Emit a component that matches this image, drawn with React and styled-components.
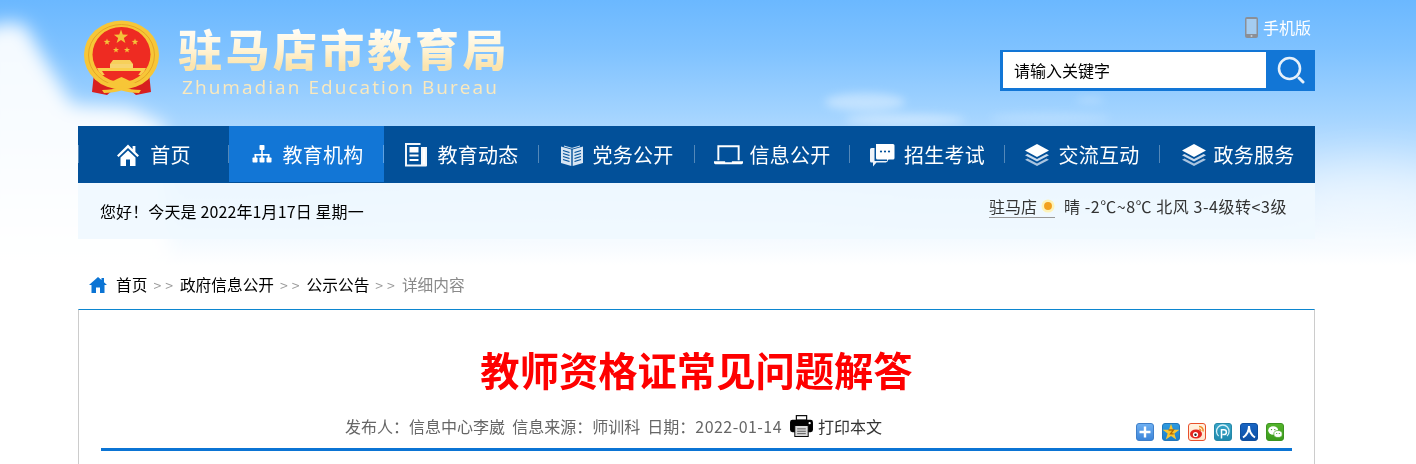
import React from "react";
import styled, { createGlobalStyle } from "styled-components";

const Global = createGlobalStyle`
  html, body { margin: 0; padding: 0; background: #fff; }
  body { font-family: "Noto Sans CJK SC", "Liberation Sans", sans-serif; }
  * { box-sizing: border-box; }
`;

const Page = styled.div`
  position: relative;
  width: 1416px;
  height: 464px;
  overflow: hidden;
  background: linear-gradient(180deg, #6bb8ff 0, #7fc2ff 50px, #a6d5ff 120px, #d3eaff 190px, #f4faff 240px, #fff 265px);
`;

const Sky = styled.svg`
  position: absolute;
  left: 0;
  top: 0;
  z-index: 0;
`;

const Wrap = styled.div`
  position: relative;
  z-index: 1;
  width: 1237px;
  margin-left: 78px;
`;

const Header = styled.header`
  height: 126px;
  display: flex;
  justify-content: space-between;
`;

const Brand = styled.div`
  display: flex;
  align-items: flex-start;
  padding: 20px 0 0 5px;
`;

const Names = styled.div`
  margin-left: 17px;
  padding-top: 5px;
`;

const CnName = styled.div`
  font-size: 44px;
  line-height: 46px;
  font-weight: 900;
  letter-spacing: 3.4px;
  white-space: nowrap;
  background: linear-gradient(180deg, #fffdf6 10%, #fff3d4 55%, #fbe4ad 90%);
  -webkit-background-clip: text;
  background-clip: text;
  color: transparent;
`;

const EnName = styled.div`
  font-family: "Open Sans", "Liberation Sans", sans-serif;
  font-size: 19px;
  line-height: 22px;
  letter-spacing: 2.05px;
  color: #fbe9bd;
  margin: 5px 0 0 4px;
  white-space: nowrap;
`;

const Tools = styled.div`
  width: 315px;
  padding-top: 15px;
  display: flex;
  flex-direction: column;
  align-items: flex-end;
`;

const Mobile = styled.a`
  display: flex;
  align-items: center;
  gap: 5px;
  height: 24px;
  margin-right: 4px;
  color: #fff;
  font-size: 16px;
`;

const Search = styled.div`
  margin-top: 11px;
  width: 315px;
  height: 41px;
  display: flex;
  background: #1276d6;
  padding: 2px 0 3px 3px;
`;

const SearchInput = styled.div`
  width: 263px;
  background: #fff;
  padding-left: 11px;
  font-size: 16px;
  line-height: 36px;
  color: #000;
`;

const SearchBtn = styled.div`
  flex: 1;
  display: flex;
  align-items: center;
  justify-content: center;
`;

const Nav = styled.nav`
  height: 57px;
  background: #025099;
  display: flex;
`;

const NavItem = styled.a`
  position: relative;
  width: ${(p) => p.$w}px;
  height: ${(p) => (p.$active ? 56 : 57)}px;
  flex: none;
  display: flex;
  align-items: center;
  justify-content: center;
  gap: ${(p) => p.$gap}px;
  padding-left: ${(p) => p.$shift || 0}px;
  font-size: 20px;
  letter-spacing: 0.3px;
  color: #fff;
  white-space: nowrap;
  background: ${(p) => (p.$active ? "#1276d6" : "transparent")};

  &::after {
    content: "";
    position: absolute;
    right: 0;
    top: 19px;
    width: 1px;
    height: 18px;
    background: rgba(255, 255, 255, 0.32);
    display: ${(p) => (p.$last ? "none" : "block")};
  }

  &::before {
    content: "";
    position: absolute;
    left: 0;
    top: 19px;
    width: 1px;
    height: 18px;
    background: rgba(255, 255, 255, 0.32);
    display: ${(p) => (p.$first ? "block" : "none")};
  }
`;

const Info = styled.div`
  height: 56px;
  background: rgba(240, 248, 255, 0.9);
  padding: 0 28px 0 22px;
  display: flex;
  justify-content: space-between;
  align-items: center;
  font-size: 16px;
  color: #222;
`;

const Greeting = styled.div`
  color: #000;
  white-space: pre;
  letter-spacing: 0.12px;
  margin-top: -1px;
`;

const Weather = styled.div`
  display: flex;
  align-items: center;
  margin-top: -10px;
  white-space: nowrap;
  color: #333;
  letter-spacing: 0.55px;
`;

const City = styled.span`
  display: flex;
  align-items: center;
  gap: 4px;
  height: 24px;
  border-bottom: 1px solid #999;
  margin-right: 9px;
  letter-spacing: 0;
`;

const Crumbs = styled.div`
  height: 70px;
  padding: 22px 0 0 11px;
  display: flex;
  align-items: center;
  font-size: 15.7px;
  line-height: 24px;
  color: #000;
  white-space: nowrap;
`;

const CrumbSep = styled.span`
  color: #999;
  font-size: 14px;
  letter-spacing: 4px;
  margin: 0 3px 0 6px;
`;

const CrumbNow = styled.span`
  color: #8a8a8a;
`;

const Article = styled.article`
  background: #fff;
  border: 1px solid #ccc;
  border-top-color: #0c86d0;
  height: 200px;
  padding: 0 22px;
`;

const Title = styled.h1`
  margin: 0;
  padding-top: 29px;
  height: 93px;
  font-size: 39.3px;
  line-height: 60px;
  font-weight: 700;
  color: #fe0000;
  text-align: center;
`;

const Meta = styled.div`
  position: relative;
  height: 48px;
  border-bottom: 3px solid #0b74d4;
  display: flex;
  align-items: flex-start;
  padding: 11px 0 0 244px;
  font-size: 16px;
  line-height: 24px;
  color: #666;
  white-space: pre;
`;

const MetaDate = styled.span`
  letter-spacing: 0.45px;
`;

const PrintLink = styled.span`
  display: flex;
  align-items: center;
  gap: 5px;
  margin-left: 8px;
  color: #333;
`;

const Share = styled.div`
  position: absolute;
  right: 8px;
  top: 20px;
  display: flex;
  gap: 8px;
`;

const ShareIcon = styled.svg`
  display: block;
  width: 18px;
  height: 18px;
`;

const NavSvg = styled.svg`
  display: block;
  flex: none;
`;

const HomeIcon = () => (
  <NavSvg width="24" height="24" viewBox="0 0 24 24" fill="#fff">
    <path d="M12 1.500 1 12.500l1.600 1.400L12 5l9.400 8.900 1.600-1.400-3.600-3.500V3h-2.800v3.300z" />
    <path d="M4.500 14.500 12 7.500l7.500 7V23H14v-6.500h-4V23H4.500z" />
  </NavSvg>
);
const OrgIcon = () => (
  <NavSvg width="20" height="20" viewBox="0 0 20 20" fill="#fff">
    <rect x="7.500" y="1" width="5" height="5" rx=".8" />
    <rect x="9.200" y="5" width="1.600" height="6" />
    <rect x="2.600" y="10" width="14.800" height="1.600" />
    <rect x="2.600" y="10" width="1.600" height="4" />
    <rect x="15.800" y="10" width="1.600" height="4" />
    <rect x="9.200" y="10" width="1.600" height="4" />
    <rect x="0.500" y="13.500" width="5" height="5" rx=".8" />
    <rect x="7.500" y="13.500" width="5" height="5" rx=".8" />
    <rect x="14.500" y="13.500" width="5" height="5" rx=".8" />
  </NavSvg>
);
const NewsIcon = () => (
  <NavSvg width="24" height="25" viewBox="0 0 24 25">
    <path d="M1 1h15.500v2H3v19.500h14V5h6v18.500a1 1 0 0 1-1 1H1z" fill="#fff" opacity=".95" />
    <rect x="5.500" y="5" width="9" height="5.500" fill="#fff" />
    <rect x="5.500" y="12.500" width="9" height="2" fill="#fff" />
    <rect x="5.500" y="17" width="9" height="2" fill="#fff" />
    <rect x="19" y="7" width="2" height="15" fill="#fff" />
  </NavSvg>
);
const BookIcon = () => (
  <NavSvg width="24" height="24" viewBox="0 0 24 24">
    <path d="M1 3.500 11.300 6.500V23L1 20z" fill="#d7e5f3" />
    <path d="M23 3.500 12.700 6.500V23L23 20z" fill="#d7e5f3" />
    <path d="M3 7.500l6.500 2M3 10.500l6.500 2M3 13.500l6.500 2M3 16.500l6.500 2M21 7.500l-6.500 2M21 10.500l-6.500 2M21 13.500l-6.500 2M21 16.500l-6.500 2" stroke="#025099" strokeWidth="1.300" />
    <path d="M4 3 11.500 5.200 12 5.500 12.500 5.200 20 3" stroke="#d7e5f3" fill="none" strokeWidth="1" />
  </NavSvg>
);
const LaptopIcon = () => (
  <NavSvg width="29" height="20" viewBox="0 0 30 20" fill="#fff">
    <path d="M3.500 0h23v15.500h-2V2h-19v13.500h-2z" />
    <path d="M0 16.500h11.500v1h7v-1H30V18a1.500 1.500 0 0 1-1.500 1.500h-27A1.500 1.500 0 0 1 0 18z" />
  </NavSvg>
);
const ChatIcon = () => (
  <NavSvg width="25" height="24" viewBox="0 0 25 24">
    <path d="M6 1h17a1.500 1.500 0 0 1 1.500 1.500V15a1.500 1.500 0 0 1-1.500 1.500h-4.500l-1.500 2V16.500H7.500A1.500 1.500 0 0 1 6 15z" fill="#fff" />
    <path d="M4.500 5H1.500A1.500 1.500 0 0 0 0 6.500V18a1.500 1.500 0 0 0 1.500 1.500H3v4l3.500-4H16l2-1.500H5a.5.5 0 0 1-.500-.500z" fill="#eef3f9" />
    <circle cx="11" cy="8.500" r="1.100" fill="#025099" />
    <circle cx="15" cy="8.500" r="1.100" fill="#025099" />
    <circle cx="19" cy="8.500" r="1.100" fill="#025099" />
  </NavSvg>
);
const LayersIcon = () => (
  <NavSvg width="24" height="22" viewBox="0 0 24 22">
    <path d="M12 0 24 6.500 12 13 0 6.500z" fill="#fff" />
    <path d="M2.500 10 0 11.200 12 17.500 24 11.200 21.500 10 12 15z" fill="#c9daec" />
    <path d="M2.500 14.500 0 15.700 12 22 24 15.700 21.500 14.500 12 19.500z" fill="#a9c4e0" />
  </NavSvg>
);

const navItems = [
  { label: "首页", w: 151, gap: 10, icon: <HomeIcon />, first: true },
  { label: "教育机构", w: 155, gap: 10, shift: 3, icon: <OrgIcon />, active: true },
  { label: "教育动态", w: 155, gap: 9, icon: <NewsIcon /> },
  { label: "党务公开", w: 156, gap: 8, icon: <BookIcon /> },
  { label: "信息公开", w: 155, gap: 6, icon: <LaptopIcon /> },
  { label: "招生考试", w: 155, gap: 9, icon: <ChatIcon /> },
  { label: "交流互动", w: 155, gap: 9, icon: <LayersIcon /> },
  { label: "政务服务", w: 155, gap: 7, shift: 2, icon: <LayersIcon />, last: true },
];

const Star = ({ cx, cy, r, fill = "#f4c33a", rot = 0 }) => {
  const pts = [];
  for (let i = 0; i < 10; i++) {
    const rad = i % 2 ? r * 0.4 : r;
    const a = ((-90 + rot + i * 36) * Math.PI) / 180;
    pts.push(`${(cx + rad * Math.cos(a)).toFixed(2)},${(cy + rad * Math.sin(a)).toFixed(2)}`);
  }
  return <polygon points={pts.join(" ")} fill={fill} />;
};

const Emblem = () => (
  <svg width="78" height="76" viewBox="0 0 78 76" style={{ display: "block" }}>
    <path d="M11 53 L9 72 L24 75 L30 70 L47 70 L53 75 L68 72 L66 53z" fill="#d81f1f" />
    <ellipse cx="38.500" cy="35" rx="37.500" ry="34.500" fill="#f7c637" />
    <ellipse cx="38.500" cy="35" rx="33" ry="30.500" fill="none" stroke="#e5a626" strokeWidth="1" />
    <ellipse cx="38.500" cy="34.500" rx="29" ry="27.500" fill="#ee2b22" />
    <Star cx={38} cy={17} r={7.500} />
    <Star cx={24} cy={22} r={3.500} />
    <Star cx={52} cy={22} r={3.500} />
    <Star cx={33} cy={30} r={3.200} />
    <Star cx={44} cy={30} r={3.200} />
    <path d="M30 40h17l3 4H27z" fill="#f7d05a" />
    <rect x="27" y="44" width="23" height="5" fill="#f7d470" />
    <path d="M14 48h49c-1 3-3 5-5 7H19c-2-2-4-4-5-7z" fill="#f9cf4c" />
    <path d="M19 51h39c-2 3-4 6-7 8H26c-3-2-5-5-7-8z" fill="#ee2b22" />
    <path d="M24 63c5-1 9-4 14.500-6 5.500 2 9.500 5 14.500 6l-2 3H26z" fill="#f7c637" />
    <path d="M19 70c7 0 13-1 19.500-4 6.500 3 12.500 4 19.500 4l-2 3c-7 0-12-1-17.500-2.500C33 72 28 73 21 73z" fill="#f7c637" />
  </svg>
);

const PhoneIcon = () => (
  <svg width="13" height="21" viewBox="0 0 13 21">
    <rect x="0" y="0" width="13" height="21" rx="2" fill="#8b8f96" />
    <rect x="1.500" y="2" width="10" height="15" fill="#a4ccf0" />
    <circle cx="6.500" cy="19" r="1" fill="#c8ccd2" />
  </svg>
);

const SearchIcon = () => (
  <svg width="28" height="28" viewBox="0 0 28 28" fill="none">
    <circle cx="12.500" cy="12.500" r="10.500" stroke="#e6f1fb" strokeWidth="2.600" />
    <path d="M22 22l4 4" stroke="#e6f1fb" strokeWidth="3" strokeLinecap="round" />
  </svg>
);

const SunIcon = () => (
  <svg width="14" height="14" viewBox="0 0 16 16">
    <circle cx="8" cy="8" r="7.500" fill="#fdf2b8" />
    <circle cx="8" cy="8" r="4.500" fill="#f2a01e" />
  </svg>
);

const CrumbHome = () => (
  <svg width="18" height="16" viewBox="0 0 18 16" style={{ marginRight: 9 }}>
    <path d="M9 0 0 8h2.500v8h4.500v-5.500h4V16h4.500V8H18l-3-2.700V1h-2.500v2.100z" fill="#0b74d4" />
  </svg>
);

const PrinterIcon = () => (
  <svg width="23" height="22" viewBox="0 0 24 23">
    <path d="M6 0h12v6H6zM7.300 1.300v3.500h9.400V1.300z" fill="#111" fillRule="evenodd" />
    <rect x="0" y="5" width="24" height="13" rx="2.500" fill="#000" />
    <rect x="5" y="11" width="14" height="11.500" fill="#d9d9d9" stroke="#000" strokeWidth="1" />
    <path d="M7.500 14.500h9M7.500 17h9M7.500 19.500h9" stroke="#555" strokeWidth="1" />
    <circle cx="20.500" cy="8.500" r="1.200" fill="#fff" />
  </svg>
);

const Tile = ({ a, b, line, children }) => (
  <ShareIcon viewBox="0 0 18 18">
    <defs>
      <linearGradient id={a + b} x1="0" x2="0" y1="0" y2="1">
        <stop offset="0" stopColor={a} />
        <stop offset="1" stopColor={b} />
      </linearGradient>
    </defs>
    <rect x=".5" y=".5" width="17" height="17" rx="2.500" fill={`url(#${a + b})`} stroke={line} />
    {children}
  </ShareIcon>
);

const shareIcons = [
  <Tile key="1" a="#6fb0f2" b="#3b84d9" line="#3f7fc9">
    <path d="M7.800 3.500h2.400v4.300h4.300v2.400h-4.300v4.300H7.800v-4.300H3.500V7.800h4.300z" fill="#fff" />
  </Tile>,
  <Tile key="2" a="#2f9be0" b="#1b7fcb" line="#2277bb">
    <Star cx={9} cy={9.500} r={8.800} fill="#f9c52f" />
    <path d="M6.500 7h5l-3 3.800h3.200" stroke="#b36b00" strokeWidth="1.300" fill="none" />
  </Tile>,
  <Tile key="3" a="#fff2e0" b="#ffe4cc" line="#e8502c">
    <ellipse cx="8" cy="11" rx="6" ry="4.600" fill="#e3241f" />
    <circle cx="7.500" cy="11.500" r="2.600" fill="#fff" />
    <circle cx="7.500" cy="11.800" r="1.200" fill="#222" />
    <path d="M11 3.500a4 4 0 0 1 4 5" stroke="#f08a24" strokeWidth="1.500" fill="none" />
    <path d="M11 6a1.800 1.800 0 0 1 1.800 2" stroke="#f08a24" strokeWidth="1.200" fill="none" />
  </Tile>,
  <Tile key="4" a="#38a6c9" b="#1f89ad" line="#2488a8">
    <path d="M4.600 13A6.300 6.300 0 1 1 13 13" stroke="#d6f0f8" strokeWidth="1.300" fill="none" />
    <path d="M7.500 15.500V6.800H10a2.300 2.300 0 0 1 0 4.800H8.500" stroke="#fff" strokeWidth="1.500" fill="none" />
  </Tile>,
  <Tile key="5" a="#1a66c4" b="#0c4ea3" line="#0e4f9f">
    <path d="M9 3c0 4.500-1.500 8.500-6 11.500M9 3c0 4.500 1.500 8.500 6 11.500" stroke="#fff" strokeWidth="2" fill="none" />
  </Tile>,
  <Tile key="6" a="#55b52d" b="#3a9a1b" line="#3c9420">
    <ellipse cx="7.200" cy="7.500" rx="5" ry="4.200" fill="#fff" />
    <ellipse cx="12" cy="11" rx="4.200" ry="3.500" fill="#fff" stroke="#46a524" strokeWidth=".7" />
    <circle cx="5.500" cy="6.600" r=".7" fill="#3a9a1b" />
    <circle cx="8.800" cy="6.600" r=".7" fill="#3a9a1b" />
    <circle cx="10.700" cy="10.500" r=".6" fill="#3a9a1b" />
    <circle cx="13.300" cy="10.500" r=".6" fill="#3a9a1b" />
  </Tile>,
];

const Clouds = () => (
  <Sky width="1416" height="300" viewBox="0 0 1416 300">
    <defs>
      <filter id="b1" x="-40%" y="-40%" width="180%" height="180%"><feGaussianBlur stdDeviation="9" /></filter>
      <filter id="b2" x="-30%" y="-100%" width="160%" height="300%"><feGaussianBlur stdDeviation="4" /></filter>
      <filter id="b3" x="-40%" y="-60%" width="180%" height="220%"><feGaussianBlur stdDeviation="22" /></filter>
    </defs>
    <g filter="url(#b1)" fill="#fff">
      <path d="M-20 30 L8 22 L25 25 L48 65 L72 105 L130 108 L165 125 L170 270 L-20 270z" opacity=".92" />
    </g>
    <g filter="url(#b2)" fill="#fff" opacity=".38">
      <ellipse cx="865" cy="102" rx="40" ry="9" />
      <ellipse cx="1050" cy="118" rx="60" ry="5" opacity=".5" />
      <ellipse cx="905" cy="120" rx="60" ry="6" />
      <ellipse cx="1090" cy="100" rx="14" ry="3" opacity=".7" />
    </g>
    <g filter="url(#b3)" fill="#fff">
      <ellipse cx="1370" cy="200" rx="90" ry="40" opacity=".45" />
      <ellipse cx="600" cy="215" rx="300" ry="30" opacity=".3" />
    </g>
  </Sky>
);

export default function App() {
  return (
    <Page>
      <Global />
      <Clouds />
      <Wrap>
        <Header>
          <Brand>
            <Emblem />
            <Names>
              <CnName>驻马店市教育局</CnName>
              <EnName>Zhumadian Education Bureau</EnName>
            </Names>
          </Brand>
          <Tools>
            <Mobile>
              <PhoneIcon />
              手机版
            </Mobile>
            <Search>
              <SearchInput>请输入关键字</SearchInput>
              <SearchBtn>
                <SearchIcon />
              </SearchBtn>
            </Search>
          </Tools>
        </Header>
        <Nav>
          {navItems.map((n) => (
            <NavItem key={n.label} $w={n.w} $gap={n.gap} $shift={n.shift} $active={n.active} $last={n.last} $first={n.first}>
              {n.icon}
              {n.label}
            </NavItem>
          ))}
        </Nav>
        <Info>
          <Greeting>您好！今天是 2022年1月17日 星期一</Greeting>
          <Weather>
            <City>
              驻马店
              <SunIcon />
            </City>
            晴 -2℃~8℃ 北风 3-4级转&lt;3级
          </Weather>
        </Info>
        <Crumbs>
          <CrumbHome />
          首页
          <CrumbSep>&gt;&gt;</CrumbSep>
          政府信息公开
          <CrumbSep>&gt;&gt;</CrumbSep>
          公示公告
          <CrumbSep>&gt;&gt;</CrumbSep>
          <CrumbNow>详细内容</CrumbNow>
        </Crumbs>
        <Article>
          <Title>教师资格证常见问题解答</Title>
          <Meta>
            <span>发布人：信息中心李崴  信息来源：师训科  日期：</span>
            <MetaDate>2022-01-14</MetaDate>
            <PrintLink>
              <PrinterIcon />
              打印本文
            </PrintLink>
            <Share>{shareIcons}</Share>
          </Meta>
        </Article>
      </Wrap>
    </Page>
  );
}
